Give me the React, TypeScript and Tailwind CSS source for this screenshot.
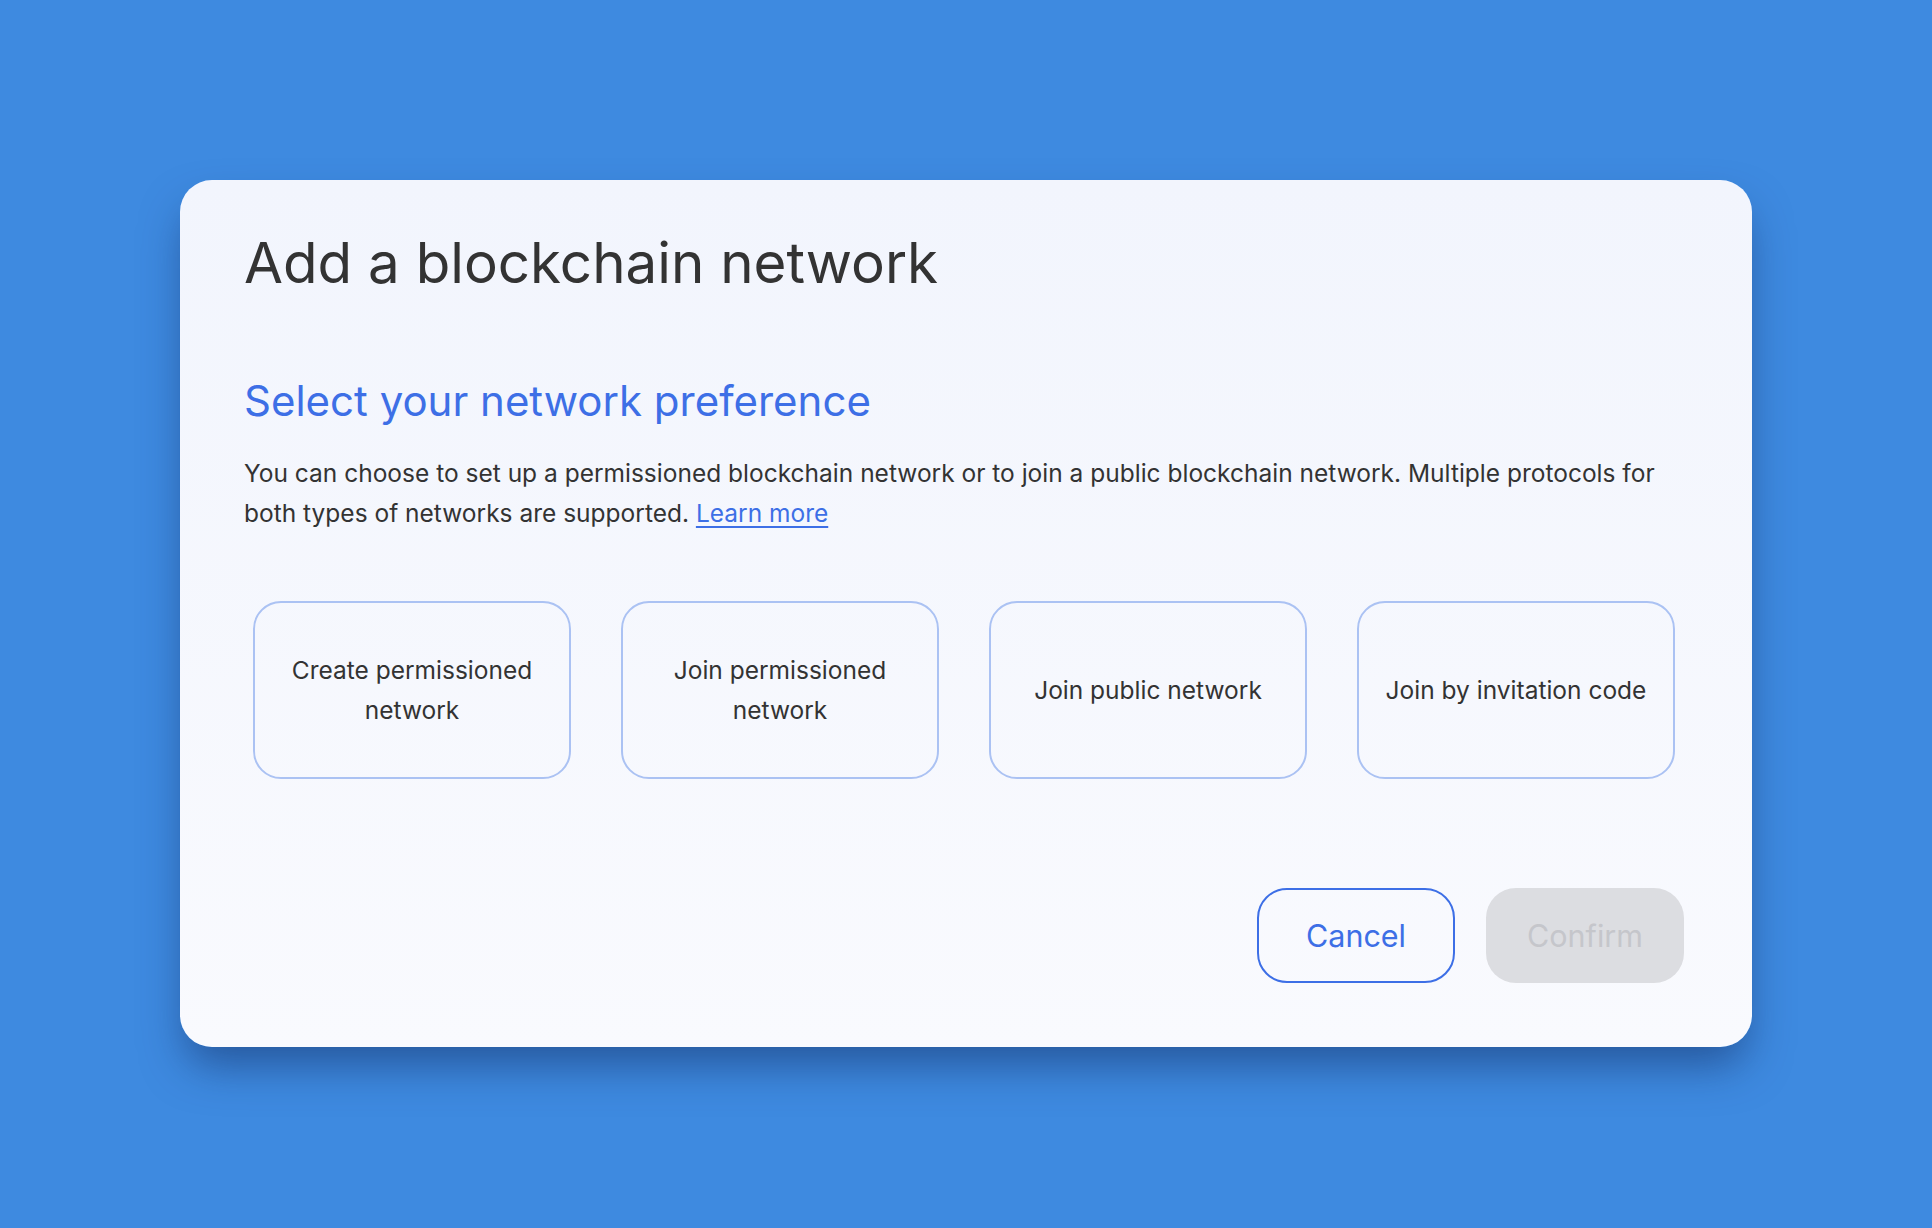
import React from "react";

const cards = [
  ["Create permissioned", "network"],
  ["Join permissioned", "network"],
  ["Join public network"],
  ["Join by invitation code"],
];

export default function App() {
  return (
    <div
      className="w-[1932px] h-[1228px] bg-[#3e8ae0] flex items-start justify-center pt-[180px]"
      style={{ fontFamily: "Inter, 'Noto Sans', sans-serif" }}
    >
      <div className="w-[1572px] h-[867px] rounded-[32px] bg-gradient-to-b from-[#f2f5fd] to-[#f9fafe] shadow-[0_24px_44px_-6px_rgba(18,45,100,0.55)] pl-[64px] pr-[68px] pt-[54px] flex flex-col">
        <h1 className="text-[56.5px] leading-[58px] text-[#333333]">
          Add a blockchain network
        </h1>
        <h2 className="mt-[87px] text-[42px] leading-[44px] text-[#3d6fe6]">
          Select your network preference
        </h2>
        <p className="mt-[30px] text-[24.5px] leading-[40px] text-[#333333]">
          You can choose to set up a permissioned blockchain network or to join a public blockchain network. Multiple protocols for
          <br />
          both types of networks are supported.{" "}
          <a href="#" className="text-[#3d6fe6] underline underline-offset-[4px]">
            Learn more
          </a>
        </p>
        <div className="mt-[68px] pl-[9px] flex gap-[50px]">
          {cards.map((lines, i) => (
            <div
              key={i}
              className="w-[318px] h-[178px] rounded-[28px] border-2 border-[#abc2f3] flex flex-col items-center justify-center text-center text-[24.5px] leading-[40px] text-[#333333]"
            >
              {lines.map((l, j) => (
                <span key={j}>{l}</span>
              ))}
            </div>
          ))}
        </div>
        <div className="mt-[109px] flex justify-end gap-[31px]">
          <button className="w-[198px] h-[95px] rounded-[30px] border-2 border-[#3d6fe6] text-[#3d6fe6] text-[30.5px]">
            Cancel
          </button>
          <button className="w-[198px] h-[95px] rounded-[30px] bg-[#dcdde1] text-[#c5c6cb] text-[30.5px]">
            Confirm
          </button>
        </div>
      </div>
    </div>
  );
}
